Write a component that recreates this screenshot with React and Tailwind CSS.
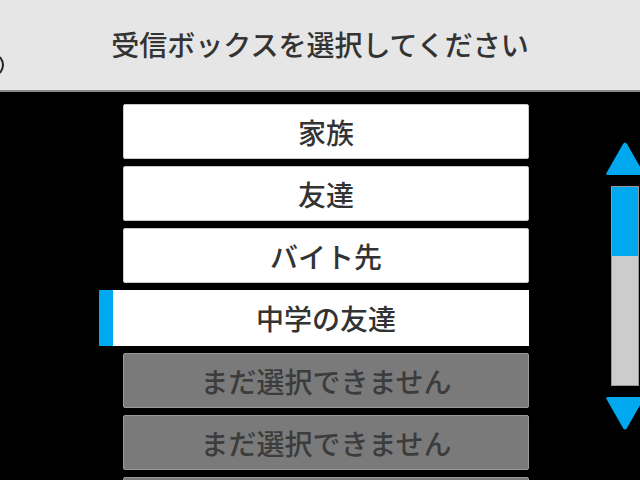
import React from "react";

const items = [
  { label: "家族", state: "on" },
  { label: "友達", state: "on" },
  { label: "バイト先", state: "on" },
  { label: "中学の友達", state: "selected" },
  { label: "まだ選択できません", state: "off" },
  { label: "まだ選択できません", state: "off" },
  { label: "まだ選択できません", state: "off" },
];

const Arrow = ({ down }) => (
  <svg width="40" height="36" viewBox="0 0 40 36" className="block shrink-0">
    <path
      d={down ? "M3 2 H37 Q40 2 38 5 L22 33 Q20 36 18 33 L2 5 Q0 2 3 2 Z" : "M3 34 H37 Q40 34 38 31 L22 3 Q20 0 18 3 L2 31 Q0 34 3 34 Z"}
      fill="#00a8f0"
    />
  </svg>
);

const Row = ({ label, state }) => {
  if (state === "selected") {
    return (
      <div className="flex h-[56px] w-[430px]">
        <div className="w-[14px] bg-[#00a8f0]" />
        <div className="flex flex-1 items-center justify-center bg-white pl-[10px] text-[28px] font-medium text-[#333]">
          {label}
        </div>
      </div>
    );
  }
  const off = state === "off";
  return (
    <div className="flex h-[55px] w-[430px] pl-[24px]">
      <div
        className={
          off
            ? "flex flex-1 items-center justify-center rounded-[2px] border border-[#9a9a9a] bg-[#7a7a7a] text-[28px] font-medium text-[#3c3c3c]"
            : "flex flex-1 items-center justify-center rounded-[2px] border border-[#c8c8c8] bg-white text-[28px] font-medium text-[#333]"
        }
      >
        {label}
      </div>
    </div>
  );
};

export default function App() {
  return (
    <div
      className="relative h-[480px] w-[640px] overflow-hidden bg-black"
      style={{ fontFamily: '"Noto Sans CJK JP", "Noto Sans", sans-serif' }}
    >
      <header className="relative flex h-[92px] items-center justify-center border-b-2 border-[#8a8a8a] bg-[#e6e6e6] pb-[2px] text-[28px] font-medium text-[#333]">
        受信ボックスを選択してください
        <svg width="8" height="18" viewBox="0 0 8 18" className="absolute left-0 top-[56px]">
          <path d="M0 1 Q6 9 0 17" stroke="#222" strokeWidth="2" fill="none" />
        </svg>
      </header>

      <div className="flex">
        <div className="ml-[99px] flex flex-col gap-[7px] pt-[12px]">
          {items.map((it, i) => (
            <Row key={i} {...it} />
          ))}
        </div>

        <div className="ml-[76px] flex w-[35px] flex-col overflow-hidden pt-[49px]">
          <Arrow />
          <div className="ml-[6px] mt-[9px] flex h-[200px] w-[28px] shrink-0 flex-col border border-[#999]">
            <div className="h-[69px] bg-[#00a8f0]" />
            <div className="flex-1 bg-[#cccccc]" />
          </div>
          <div className="mt-[9px]">
            <Arrow down />
          </div>
        </div>
      </div>
    </div>
  );
}
